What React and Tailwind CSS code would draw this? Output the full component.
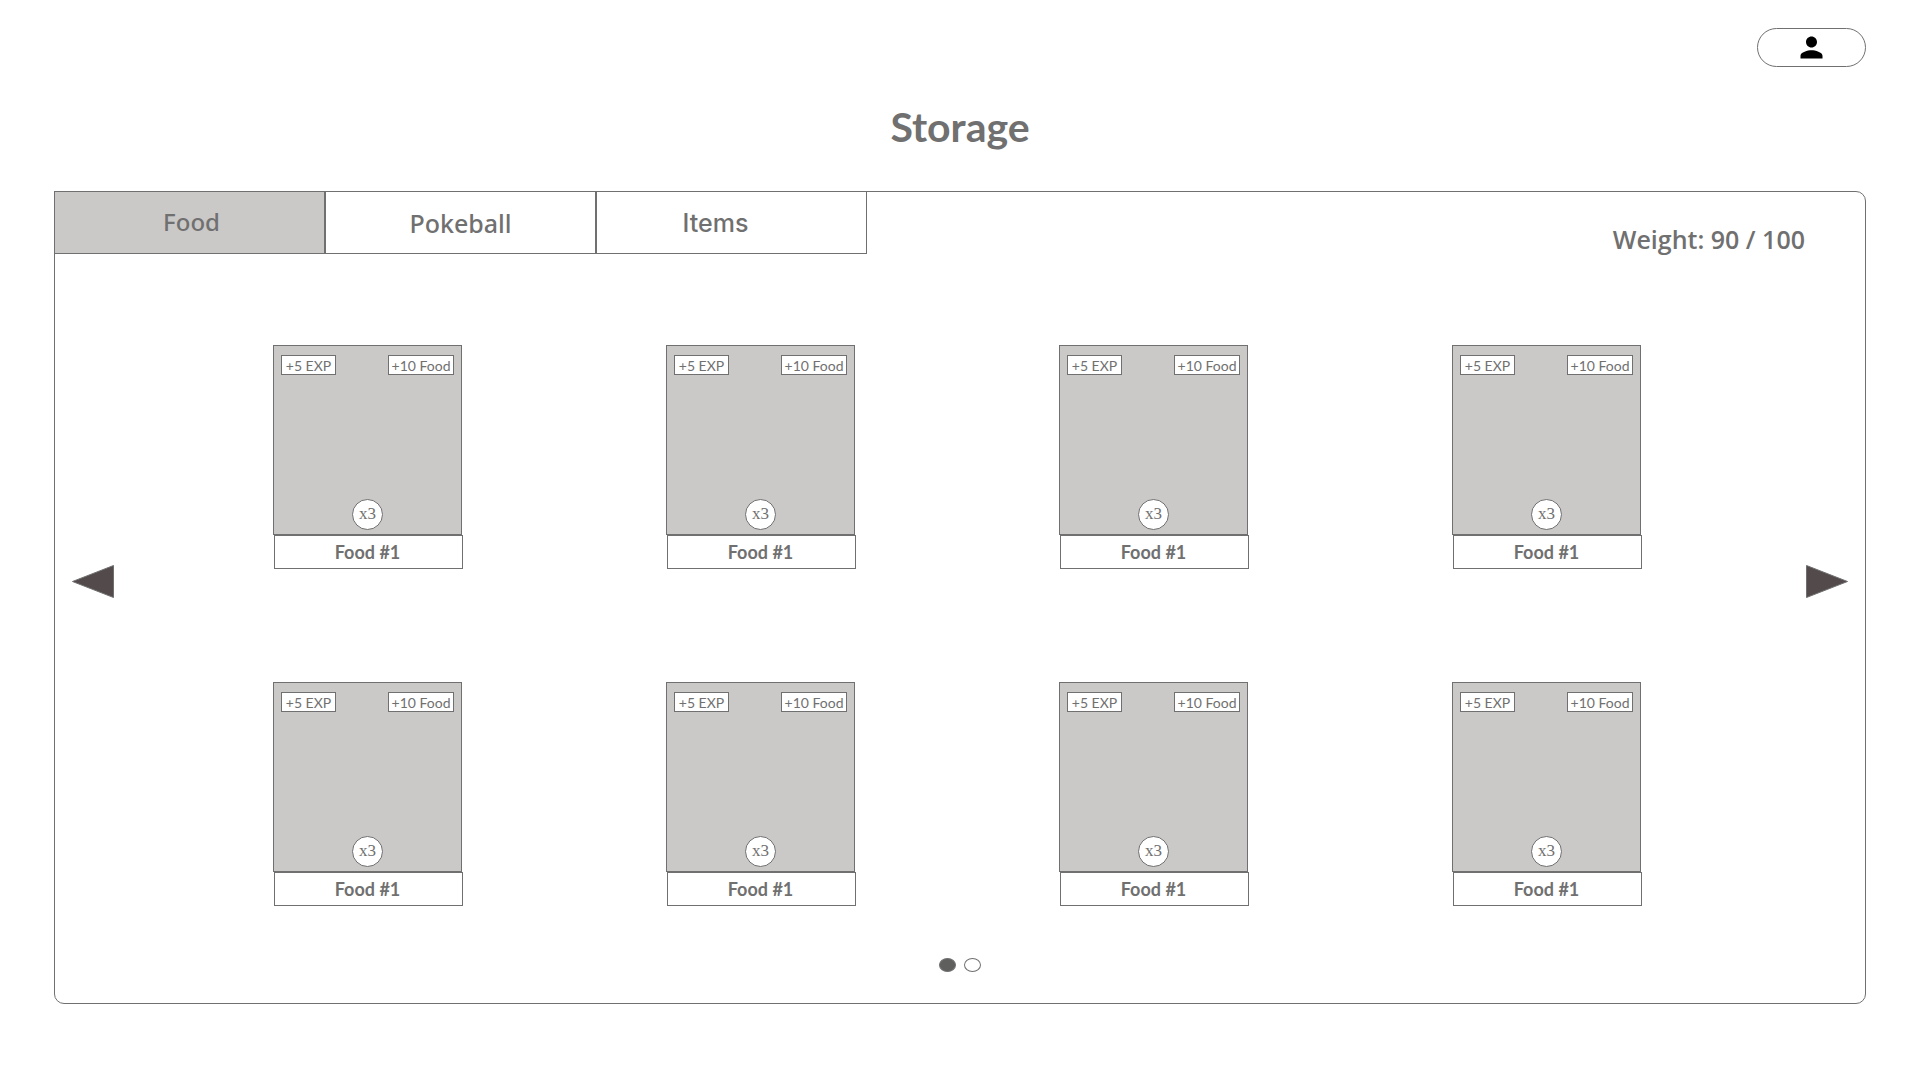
import { useState } from "react";
import { MdPerson } from "react-icons/md";

const TABS = [
  { name: "Food", style: "font-['Noto_Sans'] font-medium text-[24px] leading-8 pb-0.5 pl-1" },
  { name: "Pokeball", style: "font-['Noto_Sans'] font-medium text-[25px] leading-8" },
  { name: "Items", style: "font-['Inter'] font-medium text-[25px] leading-8 pr-8" },
];

const ITEMS = Array.from({ length: 8 }, (_, id) => ({
  id,
  name: "Food #1",
  exp: "+5 EXP",
  food: "+10 Food",
  count: "x3",
}));

function ItemCard({ item }) {
  return (
    <li className="w-[190px]">
      <div className="flex h-[190px] w-[189px] flex-col justify-between border border-[#707070] bg-[#cac9c8] px-[7px] pt-[9px] pb-1">
        <div className="flex justify-between text-[14px] leading-5">
          <span className="flex h-5 w-[55px] items-center justify-center border border-[#707070] bg-white pt-0.5">{item.exp}</span>
          <span className="flex h-5 w-[66px] items-center justify-center border border-[#707070] bg-white pt-0.5 whitespace-nowrap">{item.food}</span>
        </div>
        <span className="flex size-[31px] items-center justify-center self-center rounded-full border border-[#707070] bg-white pb-0.5 font-['Liberation_Serif',serif] text-[17px] leading-5">
          {item.count}
        </span>
      </div>
      <h2 className="ml-px flex h-[34px] items-center justify-center border border-[#707070] bg-white pr-0.5 text-[18px] leading-6 font-bold">
        {item.name}
      </h2>
    </li>
  );
}

export default function App() {
  const [tab, setTab] = useState("Food");
  const [page, setPage] = useState(0);

  return (
    <div className="min-h-screen bg-white px-[54px] pt-7 pb-[76px] font-['Lato',sans-serif] text-[#707070]">
      <header className="flex flex-col">
        <button aria-label="Profile" className="flex h-[39px] w-[109px] items-center justify-center self-end rounded-full border border-[#707070] text-black">
          <MdPerson size={33} />
        </button>
        <h1 className="mt-9 mb-10 text-center text-[41px] leading-12 font-bold">Storage</h1>
      </header>

      <main className="rounded-[10px] border border-[#707070] pb-[31px]">
        <div className="-mt-px -ml-px flex items-start justify-between">
          <div role="tablist" className="flex">
            {TABS.map((t) => (
              <button
                key={t.name}
                role="tab"
                aria-selected={tab === t.name}
                onClick={() => setTab(t.name)}
                className={`flex h-[63px] w-[271px] items-center justify-center border border-[#707070] ${t.style} ${tab === t.name ? "bg-[#cac9c8]" : "bg-white"}`}
              >
                {t.name}
              </button>
            ))}
          </div>
          <p className="mt-8 mr-[60px] font-['Open_Sans',sans-serif] text-[25px] leading-8 font-semibold">Weight: 90 / 100</p>
        </div>

        <div className="mt-[90px] flex items-center justify-between px-4">
          <button aria-label="Previous page" onClick={() => setPage(0)} className="mb-[88px]">
            <svg width="43" height="33" viewBox="0 0 43 33">
              <path d="M1.5 16.5 42.5 0.5V32.5Z" fill="#534a4b" stroke="#707070" />
            </svg>
          </button>
          <ul className="mr-[164px] ml-[159px] grid flex-1 grid-cols-[repeat(4,190px)] justify-between gap-y-[113px]">
            {ITEMS.map((item) => (
              <ItemCard key={item.id} item={item} />
            ))}
          </ul>
          <button aria-label="Next page" onClick={() => setPage(1)} className="mb-[88px]">
            <svg width="43" height="33" viewBox="0 0 43 33">
              <path d="M41.5 16.5 0.5 0.5V32.5Z" fill="#534a4b" stroke="#707070" />
            </svg>
          </button>
        </div>

        <nav aria-label="Pages" className="mt-[52px] flex justify-center gap-2">
          {[0, 1].map((n) => (
            <button
              key={n}
              aria-label={`Page ${n + 1}`}
              onClick={() => setPage(n)}
              className={`h-[14px] w-[17px] rounded-[50%] border border-[#707070] ${page === n ? "bg-[#5f5f5e]" : "bg-white"}`}
            />
          ))}
        </nav>
      </main>
    </div>
  );
}
